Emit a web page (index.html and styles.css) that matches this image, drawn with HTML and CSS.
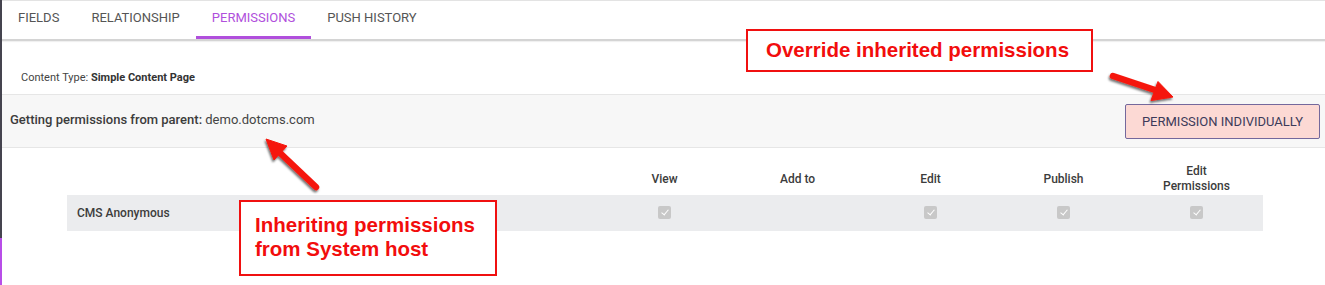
FILE: index.html
```html
<!DOCTYPE html>
<html lang="en">
<head>
    <meta charset="UTF-8">
    <title>Content Type Permissions</title>
    <link rel="stylesheet" href="styles.css">
</head>
<body>
    <div class="page">
        <!-- Tabs -->
        <nav class="tabs">
            <div class="tab">Fields</div>
            <div class="tab">Relationship</div>
            <div class="tab active">Permissions</div>
            <div class="tab">Push History</div>
        </nav>

        <div class="content-type">Content Type: <b>Simple Content Page</b></div>

        <div class="parent-bar">
            <div class="parent-text"><b>Getting permissions from parent:</b> demo.dotcms.com</div>
            <button class="btn-individual">Permission Individually</button>
        </div>

        <div class="perm-table">
            <div class="perm-head">
                <div></div>
                <div>View</div>
                <div>Add to</div>
                <div>Edit</div>
                <div>Publish</div>
                <div>Edit<br>Permissions</div>
            </div>
            <div class="perm-row">
                <div class="role">CMS Anonymous</div>
                <div><span class="check"></span></div>
                <div></div>
                <div><span class="check"></span></div>
                <div><span class="check"></span></div>
                <div><span class="check"></span></div>
            </div>
        </div>

        <!-- Annotations -->
        <div class="note note-override">Override inherited permissions</div>
        <div class="note note-inherit">Inheriting permissions<br>from System host</div>

        <svg class="arrows" width="1325" height="285" viewBox="0 0 1325 285">
            <defs>
                <filter id="shadow" x="-20%" y="-20%" width="140%" height="140%">
                    <feDropShadow dx="-1" dy="2" stdDeviation="1.3" flood-color="#000" flood-opacity="0.55"/>
                </filter>
            </defs>
            <g filter="url(#shadow)" fill="#f5170c" stroke="#f5170c">
                <line x1="1113" y1="76" x2="1158" y2="91" stroke-width="6.5" stroke-linecap="round"/>
                <polygon points="1173,97 1151,100.5 1158,81.5" stroke-width="1"/>
                <line x1="316" y1="187" x2="279" y2="152" stroke-width="6.5" stroke-linecap="round"/>
                <polygon points="266,139 287,146 274,160" stroke-width="1"/>
            </g>
        </svg>
    </div>
</body>
</html>
```

FILE: styles.css
```css
/* General Styling */
body {
    margin: 0;
    padding: 0;
    font-family: Roboto, "Noto Sans", sans-serif;
    color: #444;
    background: #fff;
}

.page {
    position: relative;
    width: 1325px;
    height: 285px;
    box-sizing: border-box;
    padding-left: 2px;
    overflow: hidden;
    background: linear-gradient(#45444f 0 238px, #b84ee8 238px) left top / 2px 100% no-repeat;
}

/* Tabs */
.tabs {
    display: flex;
    height: 38px;
    border-top: 1px solid #e3e3e3;
    border-bottom: 2px solid #d4d4d4;
    box-shadow: 0 1px 1px rgba(0, 0, 0, 0.06);
}

.tab {
    padding: 0 16px;
    line-height: 34px;
    font-size: 13px;
    text-transform: uppercase;
    color: #555;
    border-bottom: 3px solid transparent;
}

.tab.active {
    color: #b04fdc;
    border-bottom-color: #b04fdc;
}

.content-type {
    padding: 30px 0 0 19px;
    height: 23px;
    font-size: 11px;
    color: #444;
}

.content-type b {
    color: #333;
}

/* Parent bar */
.parent-bar {
    display: flex;
    align-items: center;
    justify-content: space-between;
    height: 52px;
    padding: 0 4px 0 8px;
    background: #f7f7f7;
    border-top: 1px solid #e6e6e6;
    border-bottom: 1px solid #e6e6e6;
}

.parent-text {
    font-size: 13px;
    color: #444;
    padding-bottom: 4px;
}

.parent-text b {
    font-weight: 500;
    color: #3c3c3c;
}

.btn-individual {
    width: 195px;
    height: 35px;
    margin-top: 1px;
    margin-right: 1px;
    background: #fcd9d4;
    border: 1px solid #74689c;
    border-radius: 2px;
    font-family: Roboto, sans-serif;
    font-size: 13px;
    text-transform: uppercase;
    color: #3c3b5a;
}

/* Permissions table */
.perm-table {
    width: 1196px;
    margin: 14px 0 0 65px;
}

.perm-head,
.perm-row {
    display: grid;
    grid-template-columns: 531px repeat(5, 133px);
    align-items: center;
    text-align: center;
}

.perm-head {
    height: 32px;
    font-size: 12px;
    font-weight: 500;
    line-height: 15px;
    color: #3c3c3c;
    padding-top: 1px;
}

.perm-row {
    height: 36px;
    background: #ebecee;
}

.role {
    text-align: left;
    padding-left: 10px;
    font-size: 12px;
    font-weight: 500;
    color: #3c3c3c;
}

.check {
    position: relative;
    display: inline-block;
    width: 13px;
    height: 13px;
    margin-top: 3px;
    border-radius: 2px;
    background: #c8c8c8;
}

.check::after {
    content: "";
    position: absolute;
    left: 4.5px;
    top: 2px;
    width: 3px;
    height: 6px;
    border-right: 1.2px solid #fff;
    border-bottom: 1.2px solid #fff;
    transform: rotate(40deg);
}

/* Annotations */
.note {
    position: absolute;
    box-sizing: border-box;
    background: #fff;
    border: 2px solid #f01010;
    color: #f20d0d;
    font-family: "Liberation Sans", Arial, sans-serif;
    font-weight: bold;
    font-size: 20.5px;
}

.note-override {
    left: 746px;
    top: 29px;
    width: 347px;
    height: 43px;
    padding: 7px 0 0 18px;
}

.note-inherit {
    left: 239px;
    top: 200px;
    width: 258px;
    height: 76px;
    padding: 11px 0 0 14px;
    line-height: 24px;
}

.arrows {
    position: absolute;
    left: 0;
    top: 0;
}
```
